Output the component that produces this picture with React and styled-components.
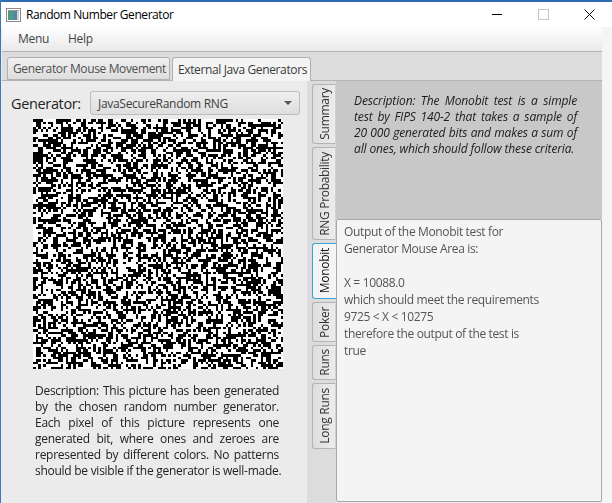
import React, { useEffect, useRef } from "react";
import styled, { createGlobalStyle } from "styled-components";

const GlobalStyle = createGlobalStyle`
  html, body { margin: 0; padding: 0; background: #f5f5f5; }
  * { box-sizing: border-box; }
`;

const FONT = `"Open Sans", "Noto Sans", sans-serif`;

const leftLines = [
  "Description: This picture has been generated",
  "by the chosen random number generator.",
  "Each pixel of this picture represents one",
  "generated bit, where ones and zeroes are",
  "represented by different colors. No patterns",
];

const rightLines = [
  "Description: The Monobit test is a simple",
  "test by FIPS 140-2 that takes a sample of",
  "20 000 generated bits and makes a sum of",
];

const outputLines = [
  "Output of the Monobit test for",
  "Generator Mouse Area is:",
  "\u00a0",
  "X = 10088.0",
  "which should meet the requirements",
  "9725 < X < 10275",
  "therefore the output of the test is",
  "true",
];

const sideTabs = [
  { name: "Summary", size: 60 },
  { name: "RNG Probability", size: 93 },
  { name: "Monobit", size: 56, active: true },
  { name: "Poker", size: 40 },
  { name: "Runs", size: 35 },
  { name: "Long Runs", size: 66 },
];

function NoisePicture() {
  const ref = useRef(null);
  useEffect(() => {
    const ctx = ref.current.getContext("2d");
    let seed = 20000;
    const next = () => {
      seed = (seed + 0x6d2b79f5) | 0;
      let t = Math.imul(seed ^ (seed >>> 15), 1 | seed);
      t = (t + Math.imul(t ^ (t >>> 7), 61 | t)) ^ t;
      return ((t ^ (t >>> 14)) >>> 0) / 4294967296;
    };
    ctx.fillStyle = "#fff";
    ctx.fillRect(0, 0, 100, 100);
    ctx.fillStyle = "#000";
    for (let y = 0; y < 100; y++) {
      for (let x = 0; x < 100; x++) {
        if (next() > 0.5) ctx.fillRect(x, y, 1, 1);
      }
    }
  }, []);
  return <Noise ref={ref} width={100} height={100} />;
}

export default function App() {
  return (
    <>
      <GlobalStyle />
      <Page>
        <DesktopEdge />
        <TitleBar>
          <AppIcon viewBox="0 0 15 14">
            <rect x="0.5" y="0.5" width="14" height="13" fill="#fff" stroke="#8a8a8a" />
            <rect x="2" y="3" width="6" height="9" fill="#4f9a86" />
            <rect x="8" y="3" width="3" height="9" fill="#5a7fa8" />
            <rect x="11" y="3" width="2" height="9" fill="#c9d4dc" />
            <rect x="2" y="2" width="11" height="1" fill="#9a9a9a" />
          </AppIcon>
          <TitleText>Random Number Generator</TitleText>
          <WindowControls>
            <ControlIcon viewBox="0 0 11 11">
              <path d="M0 5.5H10" stroke="#000" strokeWidth="1" />
            </ControlIcon>
            <ControlIcon viewBox="0 0 11 11">
              <rect x="0.5" y="0.5" width="10" height="10" fill="none" stroke="#c4c4c4" />
            </ControlIcon>
            <ControlIcon viewBox="0 0 11 11">
              <path d="M0.5 0.5L10.5 10.5M10.5 0.5L0.5 10.5" stroke="#000" strokeWidth="1" />
            </ControlIcon>
          </WindowControls>
        </TitleBar>
        <Body>
          <Content>
            <MenuBar>
              <MenuItem>Menu</MenuItem>
              <MenuItem>Help</MenuItem>
            </MenuBar>
            <TabBar>
              <TopTab>Generator Mouse Movement</TopTab>
              <TopTab $active>External Java Generators</TopTab>
            </TabBar>
            <Main>
              <LeftPanel>
                <GeneratorRow>
                  <GeneratorLabel>Generator:</GeneratorLabel>
                  <Combo>
                    <span>JavaSecureRandom RNG</span>
                    <ComboArrow />
                  </Combo>
                </GeneratorRow>
                <NoisePicture />
                <PictureText>
                  {leftLines.map((l) => (
                    <JustifiedLine key={l}>{l}</JustifiedLine>
                  ))}
                  <LastLine>should be visible if the generator is well-made.</LastLine>
                </PictureText>
              </LeftPanel>
              <SideTabs>
                {sideTabs.map((t) => (
                  <SideTab key={t.name} $size={t.size} $active={t.active}>
                    <SideLabel $active={t.active}>{t.name}</SideLabel>
                  </SideTab>
                ))}
              </SideTabs>
              <RightColumn>
                <TestDescription>
                  {rightLines.map((l) => (
                    <JustifiedLine key={l}>{l}</JustifiedLine>
                  ))}
                  <LastLine>all ones, which should follow these criteria.</LastLine>
                </TestDescription>
                <OutputArea>
                  {outputLines.map((l, i) => (
                    <OutputLine key={i}>{l}</OutputLine>
                  ))}
                </OutputArea>
              </RightColumn>
            </Main>
          </Content>
        </Body>
      </Page>
    </>
  );
}

const Page = styled.div`
  width: 612px;
  height: 503px;
  overflow: hidden;
  display: flex;
  flex-direction: column;
  background: #fff;
  border-left: 1px solid #3f78b8;
  font-family: ${FONT};
`;

const DesktopEdge = styled.div`
  height: 2px;
  flex: none;
  background: #2b6cb3;
`;

const TitleBar = styled.div`
  height: 25px;
  flex: none;
  display: flex;
  align-items: center;
  padding-left: 5px;
  background: #fff;
`;

const AppIcon = styled.svg`
  width: 15px;
  height: 14px;
  margin-right: 5px;
`;

const TitleText = styled.div`
  font-size: 12px;
  letter-spacing: -0.43px;
  color: #000;
`;

const WindowControls = styled.div`
  margin-left: auto;
  display: flex;
  gap: 35px;
  padding-right: 17px;
`;

const ControlIcon = styled.svg`
  width: 11px;
  height: 11px;
`;

const Body = styled.div`
  flex: 1;
  min-height: 0;
  display: flex;
  background: #f5f5f5;
`;

const Content = styled.div`
  width: 601px;
  display: flex;
  flex-direction: column;
  background: #ebebeb;
  padding-left: 1px;
`;

const MenuBar = styled.div`
  height: 25px;
  flex: none;
  display: flex;
  align-items: center;
  gap: 19px;
  padding: 0 0 1px 16px;
  background: linear-gradient(#ffffff, #e9e9e9);
  border-bottom: 1px solid #b4b4b4;
`;

const MenuItem = styled.div`
  font-size: 12px;
  letter-spacing: -0.3px;
  color: #454545;
`;

const TabBar = styled.div`
  height: 29px;
  flex: none;
  display: flex;
  align-items: flex-end;
  gap: 2px;
  padding-left: 5px;
  background: #dcdcdc;
  border-bottom: 1px solid #b4b4b4;
`;

const TopTab = styled.div`
  height: ${(p) => (p.$active ? "24px" : "23px")};
  margin-bottom: ${(p) => (p.$active ? "-1px" : "0")};
  padding: 0 3px 0 5px;
  display: flex;
  align-items: center;
  font-size: 12px;
  letter-spacing: -0.37px;
  white-space: nowrap;
  color: ${(p) => (p.$active ? "#3a3a3a" : "#505050")};
  background: ${(p) => (p.$active ? "#f4f4f4" : "linear-gradient(#f0f0f0, #dedede)")};
  border: 1px solid #b0b0b0;
  border-bottom: ${(p) => (p.$active ? "none" : "1px solid #b0b0b0")};
  border-radius: 3px 3px 0 0;
  position: relative;
`;

const Main = styled.div`
  flex: 1;
  min-height: 0;
  display: flex;
`;

const LeftPanel = styled.div`
  width: 305px;
  flex: none;
  display: flex;
  flex-direction: column;
  align-items: flex-start;
  background: #ebebeb;
`;

const GeneratorRow = styled.div`
  display: flex;
  align-items: center;
  height: 24px;
  margin: 10px 0 4px 9px;
`;

const GeneratorLabel = styled.div`
  width: 79px;
  font-size: 14.5px;
  letter-spacing: -0.35px;
  color: #222;
`;

const Combo = styled.div`
  width: 210px;
  height: 24px;
  display: flex;
  align-items: center;
  justify-content: space-between;
  padding: 0 7px;
  font-size: 12px;
  letter-spacing: -0.3px;
  color: #3d3d3d;
  background: linear-gradient(#efefef, #dedede);
  border: 1px solid #bcbcbc;
  border-radius: 3px;
`;

const ComboArrow = styled.i`
  width: 0;
  height: 0;
  border-left: 4px solid transparent;
  border-right: 4px solid transparent;
  border-top: 4px solid #555;
`;

const Noise = styled.canvas`
  display: block;
  width: 250px;
  height: 250px;
  margin-left: 31px;
  image-rendering: pixelated;
`;

const PictureText = styled.div`
  width: 244px;
  margin: 14px 0 0 33px;
  font-size: 12px;
  letter-spacing: -0.27px;
  line-height: 16px;
  color: #222;
`;

const JustifiedLine = styled.div`
  text-align: justify;
  text-align-last: justify;
  white-space: nowrap;
`;

const LastLine = styled.div`
  white-space: nowrap;
`;

const SideTabs = styled.div`
  width: 29px;
  flex: none;
  display: flex;
  flex-direction: column;
  align-items: flex-end;
  gap: 3px;
  padding-top: 3px;
  background: #dcdcdc;
`;

const SideTab = styled.div`
  width: 24px;
  height: ${(p) => p.$size}px;
  display: flex;
  align-items: center;
  justify-content: center;
  background: ${(p) => (p.$active ? "#f4f4f4" : "linear-gradient(to left, #ececec, #dedede)")};
  border: 1px solid ${(p) => (p.$active ? "#3aa6d8" : "#b4b4b4")};
  border-right: ${(p) => (p.$active ? "none" : "1px solid #d0d0d0")};
  border-radius: 3px 0 0 3px;
`;

const SideLabel = styled.span`
  writing-mode: vertical-rl;
  transform: rotate(180deg);
  white-space: nowrap;
  font-size: 12px;
  letter-spacing: -0.3px;
  color: ${(p) => (p.$active ? "#111" : "#333")};
`;

const RightColumn = styled.div`
  width: 266px;
  flex: none;
  display: flex;
  flex-direction: column;
`;

const TestDescription = styled.div`
  height: 138px;
  flex: none;
  padding: 12px 25px 0 18px;
  font-size: 12px;
  letter-spacing: -0.14px;
  font-style: italic;
  line-height: 16px;
  color: #1c1c1c;
  background: #c8c8c8;
`;

const OutputArea = styled.div`
  flex: 1;
  margin-bottom: 1px;
  padding: 3px 7px;
  background: #f4f4f4;
  border: 1px solid #a8a8a8;
  border-radius: 2px;
`;

const OutputLine = styled.div`
  font-size: 12px;
  letter-spacing: -0.35px;
  line-height: 17px;
  color: #555;
  white-space: nowrap;
`;
